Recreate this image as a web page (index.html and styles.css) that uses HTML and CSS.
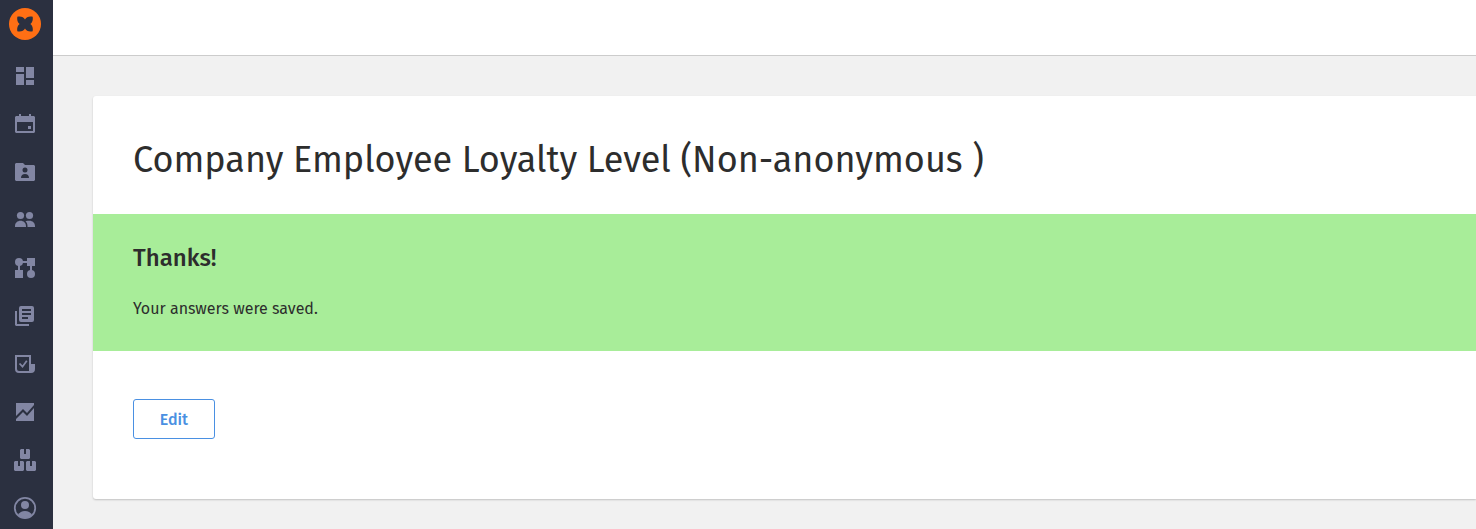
FILE: index.html
```html
<!DOCTYPE html>
<html lang="en">
<head>
    <meta charset="UTF-8">
    <meta name="viewport" content="width=device-width, initial-scale=1.0">
    <title>Company Employee Loyalty Level</title>
    <link rel="stylesheet" href="styles.css">
</head>
<body>
    <nav class="sidebar">
        <a href="#" class="logo" aria-label="Home">
            <svg viewBox="0 0 32 32">
                <circle cx="16" cy="16" r="16" fill="#ff6f14"/>
                <path fill="#2b3040" d="M8.300 8.800c3.700-.7 6.400.3 7.700 2.800 1.300-2.500 4-3.500 7.700-2.800.5 3.200-.3 5.700-2.300 7.200 2 1.500 2.800 4 2.300 7.200-3.700.7-6.400-.3-7.700-2.800-1.300 2.500-4 3.500-7.700 2.800-.5-3.200.3-5.700 2.300-7.200-2-1.500-2.800-4-2.300-7.200z"/>
            </svg>
        </a>
        <a href="#" class="nav-item" aria-label="Dashboard">
            <svg viewBox="0 0 24 24"><path d="M3 3h8v5H3zM13 3h8v11h-8zM3 10h8v11H3zM13 16h8v5h-8z"/></svg>
        </a>
        <a href="#" class="nav-item" aria-label="Calendar">
            <svg viewBox="0 0 24 24"><path fill-rule="evenodd" d="M6 2h2v2h8V2h2v2h3l1 1v15l-1 1H3l-1-1V5l1-1h3zM4 10v9h16v-9zM15 14h3v3h-3z"/></svg>
        </a>
        <a href="#" class="nav-item" aria-label="Personal files">
            <svg viewBox="0 0 24 24"><path fill-rule="evenodd" d="M3 3h7l2 2h9l1 1v14l-1 1H3l-1-1V4zM12 7.500a2.500 2.500 0 1 0 0 5a2.500 2.500 0 1 0 0-5zM8 18h8c0-2.500-1.500-4-4-4s-4 1.500-4 4z"/></svg>
        </a>
        <a href="#" class="nav-item" aria-label="Employees">
            <svg viewBox="0 0 24 24"><circle cx="7.500" cy="7.500" r="3.600"/><circle cx="16.500" cy="7.500" r="3.600"/><path d="M2 19v-1c0-3.200 2.500-5.300 5.500-5.300S13 14.800 13 18v1zM14.500 19v-1c0-2-.7-3.600-2-4.800 1-.4 2.500-.5 4-.5 3 0 5.500 2.100 5.500 5.300v1z"/></svg>
        </a>
        <a href="#" class="nav-item" aria-label="Processes">
            <svg viewBox="0 0 24 24"><circle cx="6" cy="6" r="4"/><circle cx="18" cy="18" r="4"/><path d="M14 2h8v8h-8zM2 14h8v8H2zM9 5h6v2H9zM5 9h2v6H5zM17 9h2v6h-2z"/></svg>
        </a>
        <a href="#" class="nav-item" aria-label="Documents">
            <svg viewBox="0 0 24 24"><path fill-rule="evenodd" d="M8 2h11a2 2 0 0 1 2 2v12a2 2 0 0 1-2 2H8a2 2 0 0 1-2-2V4a2 2 0 0 1 2-2zM9 5v2h9V5zM9 9v2h9V9zM9 13v2h6v-2zM2 7h2v13h12v2H3l-1-1z"/></svg>
        </a>
        <a href="#" class="nav-item" aria-label="Surveys">
            <svg viewBox="0 0 24 24"><path fill-rule="evenodd" d="M2 3h16v9h4v5a4 4 0 0 1-4 4H6a4 4 0 0 1-4-4zM4 5v12a2 2 0 0 0 2 2h10V5z"/><path class="stroke" d="M6.500 11.500l3 3.200 4.300-5.900"/></svg>
        </a>
        <a href="#" class="nav-item" aria-label="Reports">
            <svg viewBox="0 0 24 24"><path d="M3 3h18v2l-7 8-4-4-7 7zM3 19l7-7 4 4 7-8v13H3z"/></svg>
        </a>
        <a href="#" class="nav-item" aria-label="Assets">
            <svg viewBox="0 0 24 24"><path d="M8 1h3v5h2V1h3l1 1v8l-1 1H8l-1-1V2zM2 13h3v5h2v-5h3l1 1v8l-1 1H2l-1-1v-8zM14 13h3v5h2v-5h3l1 1v8l-1 1h-8l-1-1v-8z"/></svg>
        </a>
        <a href="#" class="nav-item" aria-label="Profile">
            <svg viewBox="0 0 24 24"><circle class="stroke" cx="12" cy="12" r="10.200"/><circle cx="12" cy="9" r="4"/><path d="M5 19c1.300-2.800 4-4 7-4s5.700 1.200 7 4c-1.800 1.900-4.300 3-7 3s-5.200-1.100-7-3z"/></svg>
        </a>
    </nav>

    <div class="page">
        <header class="topbar"></header>
        <main class="card">
            <h1 class="title">Company Employee Loyalty Level (Non-anonymous )</h1>
            <section class="message">
                <h2>Thanks!</h2>
                <p>Your answers were saved.</p>
            </section>
            <div class="actions">
                <button type="button" class="btn">Edit</button>
            </div>
        </main>
    </div>
</body>
</html>
```
FILE: styles.css
```css
* {
    box-sizing: border-box;
}

body {
    margin: 0;
    display: flex;
    height: 529px;
    overflow: hidden;
    background: #f1f1f1;
    color: #2d2d2d;
    font-family: "Fira Sans", "Noto Sans", sans-serif;
}

/* Sidebar */
.sidebar {
    flex: 0 0 53px;
    display: flex;
    flex-direction: column;
    padding: 8px 0 0 9px;
    background: #2b3040;
}

.logo {
    height: 32px;
    margin-bottom: 24px;
}

.logo svg {
    display: block;
    width: 32px;
    height: 32px;
}

.nav-item {
    flex: none;
    height: 24px;
    margin: 0 0 24px 4px;
}

.nav-item svg {
    display: block;
    width: 24px;
    height: 24px;
    fill: #8286a3;
}

.nav-item .stroke {
    fill: none;
    stroke: #8286a3;
    stroke-width: 1.8;
}

/* Content */
.page {
    flex: 1;
    min-width: 0;
}

.topbar {
    height: 56px;
    background: #fff;
    border-bottom: 1px solid #ccc;
}

.card {
    height: 403px;
    margin: 40px 0 0 40px;
    background: #fff;
    border-radius: 3px 0 0 3px;
    box-shadow: 0 1px 2px rgba(0, 0, 0, 0.2);
}

.title {
    height: 118px;
    margin: 0;
    padding: 40px 40px 0;
    font-size: 36px;
    font-weight: 400;
    line-height: 48px;
}

.message {
    height: 137px;
    padding: 28px 40px 0;
    background: #a8ed99;
}

.message h2 {
    margin: 0;
    font-size: 24px;
    font-weight: 500;
    line-height: 32px;
}

.message p {
    margin: 23px 0 0;
    font-size: 16px;
    line-height: 24px;
}

.actions {
    padding: 48px 40px 0;
}

.btn {
    display: block;
    width: 82px;
    height: 40px;
    padding: 0;
    background: #fff;
    border: 1px solid #4a90e2;
    border-radius: 3px;
    color: #4a90e2;
    font-family: inherit;
    font-size: 16px;
    font-weight: 500;
}
```
